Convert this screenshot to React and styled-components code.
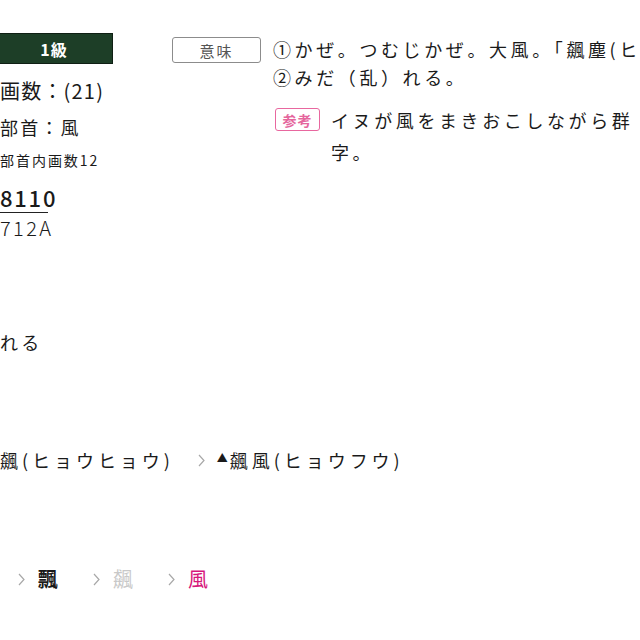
import React from "react";
import styled, { createGlobalStyle } from "styled-components";

const GlobalStyle = createGlobalStyle`
  html, body { margin: 0; padding: 0; background: #fff; overflow: hidden; }
  body {
    font-family: "Noto Sans CJK JP", "Noto Sans", sans-serif;
    color: #1a1a1a;
    width: 640px;
    height: 640px;
  }
`;

const Page = styled.div`
  padding-top: 33px;
  width: 640px;
  overflow: hidden;
`;

const Top = styled.div`
  display: flex;
  align-items: flex-start;
`;

const LeftCol = styled.div`
  width: 172px;
  flex-shrink: 0;
  display: flex;
  flex-direction: column;
  align-items: flex-start;
`;

const GradeBar = styled.div`
  width: 113px;
  height: 31px;
  box-sizing: border-box;
  background: #1d3e27;
  border: 1px solid #0f1f14;
  border-left: none;
  color: #fff;
  font-weight: 700;
  font-size: 16px;
  display: flex;
  align-items: center;
  justify-content: center;
  padding-right: 4px;
  letter-spacing: 1px;
`;

const Stat = styled.div`
  font-size: ${(p) => p.$size}px;
  line-height: ${(p) => p.$lh}px;
  margin-top: ${(p) => p.$mt}px;
  letter-spacing: ${(p) => p.$ls || "0.08em"};
  font-weight: ${(p) => p.$weight || 400};
  color: ${(p) => p.$color || "#1a1a1a"};
  white-space: nowrap;
`;

const CodeBlock = styled.div`
  display: flex;
  flex-direction: column;
  align-items: flex-start;
  margin-top: 14px;
`;

const Rule = styled.div`
  width: 48px;
  height: 1px;
  margin-top: 2px;
  background: #222;
`;

const RightCol = styled.div`
  flex: 1;
  min-width: 0;
  display: flex;
  flex-direction: column;
`;

const Row = styled.div`
  display: flex;
  align-items: flex-start;
  margin-top: ${(p) => p.$mt}px;
`;

const LabelBox = styled.div`
  width: 89px;
  height: 26px;
  box-sizing: border-box;
  margin-top: 4px;
  border: 1px solid #8c8c8c;
  border-radius: 3px;
  font-size: 15px;
  color: #555;
  display: flex;
  align-items: center;
  justify-content: center;
  letter-spacing: 2px;
  flex-shrink: 0;
`;

const Badge = styled.div`
  width: 45px;
  height: 23px;
  box-sizing: border-box;
  margin-left: 103px;
  margin-top: 4px;
  border: 1.5px solid #e8679f;
  border-radius: 3px;
  font-size: 14px;
  font-weight: 700;
  color: #e5669d;
  display: flex;
  align-items: center;
  justify-content: center;
  letter-spacing: 1px;
  flex-shrink: 0;
`;

const Body = styled.div`
  margin-left: ${(p) => p.$ml}px;
  margin-top: ${(p) => p.$mt}px;
  font-size: 18px;
  line-height: ${(p) => p.$lh}px;
  letter-spacing: 0.2em;
  white-space: nowrap;
  color: #1a1a1a;
`;

const Line = styled.div`
  font-size: 18px;
  line-height: 28px;
  margin-top: ${(p) => p.$mt}px;
  letter-spacing: 0.18em;
  white-space: nowrap;
`;

const Compounds = styled.div`
  display: flex;
  align-items: center;
  margin-top: ${(p) => p.$mt}px;
  font-size: 18px;
  line-height: 28px;
  white-space: nowrap;
`;

const Word = styled.span`
  letter-spacing: 0.22em;
`;

const Mark = styled.span`
  font-size: 11px;
  position: relative;
  top: -3px;
  margin-right: 2px;
`;

const Chev = styled.svg`
  width: 7px;
  height: 13px;
  flex-shrink: 0;
  margin: ${(p) => p.$m};
`;

const Chevron = ({ m }) => (
  <Chev viewBox="0 0 7 13" $m={m}>
    <polyline points="1,1 6,6.5 1,12" fill="none" stroke="#a8a8a8" strokeWidth="1.2" />
  </Chev>
);

const Chain = styled.div`
  display: flex;
  align-items: center;
  margin-top: ${(p) => p.$mt}px;
  padding-left: 18px;
  height: 28px;
`;

const ChainItem = styled.div`
  display: flex;
  align-items: center;
  gap: 13px;
  margin-right: 35px;
`;

const Kanji = styled.span`
  font-size: 20px;
  font-weight: ${(p) => (p.$bold ? 700 : 400)};
  color: ${(p) => p.$color};
  line-height: 28px;
`;

export default function App() {
  return (
    <>
      <GlobalStyle />
      <Page>
        <Top>
          <LeftCol>
            <GradeBar>1級</GradeBar>
            <Stat $size={20} $lh={28} $mt={13} $ls="0.06em">画数：(21)</Stat>
            <Stat $size={18} $lh={28} $mt={8} $ls="0.12em">部首：風</Stat>
            <Stat $size={14} $lh={20} $mt={9} $ls="0.14em">部首内画数12</Stat>
            <CodeBlock>
              <Stat $size={22} $lh={26} $mt={0} $ls="0.08em" $weight={500}>8110</Stat>
              <Rule />
            </CodeBlock>
            <Stat $size={20} $lh={26} $mt={2} $ls="0.12em" $weight={300}>712A</Stat>
          </LeftCol>
          <RightCol>
            <Row $mt={0}>
              <LabelBox>意味</LabelBox>
              <Body $ml={12} $mt={2} $lh={28}>
                ①かぜ。つむじかぜ。大風。「飆塵(ヒ
                <br />
                ②みだ（乱）れる。
              </Body>
            </Row>
            <Row $mt={13}>
              <Badge>参考</Badge>
              <Body $ml={11} $mt={0} $lh={32}>
                イヌが風をまきおこしながら群
                <br />
                字。
              </Body>
            </Row>
          </RightCol>
        </Top>
        <Line $mt={87}>れる</Line>
        <Compounds $mt={90}>
          <Word>飆(ヒョウヒョウ)</Word>
          <Chevron m="0 12px 0 24px" />
          <Mark>▲</Mark>
          <Word>飆風(ヒョウフウ)</Word>
        </Compounds>
        <Chain $mt={91}>
          <ChainItem>
            <Chevron m="0" />
            <Kanji $bold $color="#1a1a1a">飄</Kanji>
          </ChainItem>
          <ChainItem>
            <Chevron m="0" />
            <Kanji $color="#c8c8c8">飆</Kanji>
          </ChainItem>
          <ChainItem>
            <Chevron m="0" />
            <Kanji $color="#d6157a">風</Kanji>
          </ChainItem>
        </Chain>
      </Page>
    </>
  );
}
